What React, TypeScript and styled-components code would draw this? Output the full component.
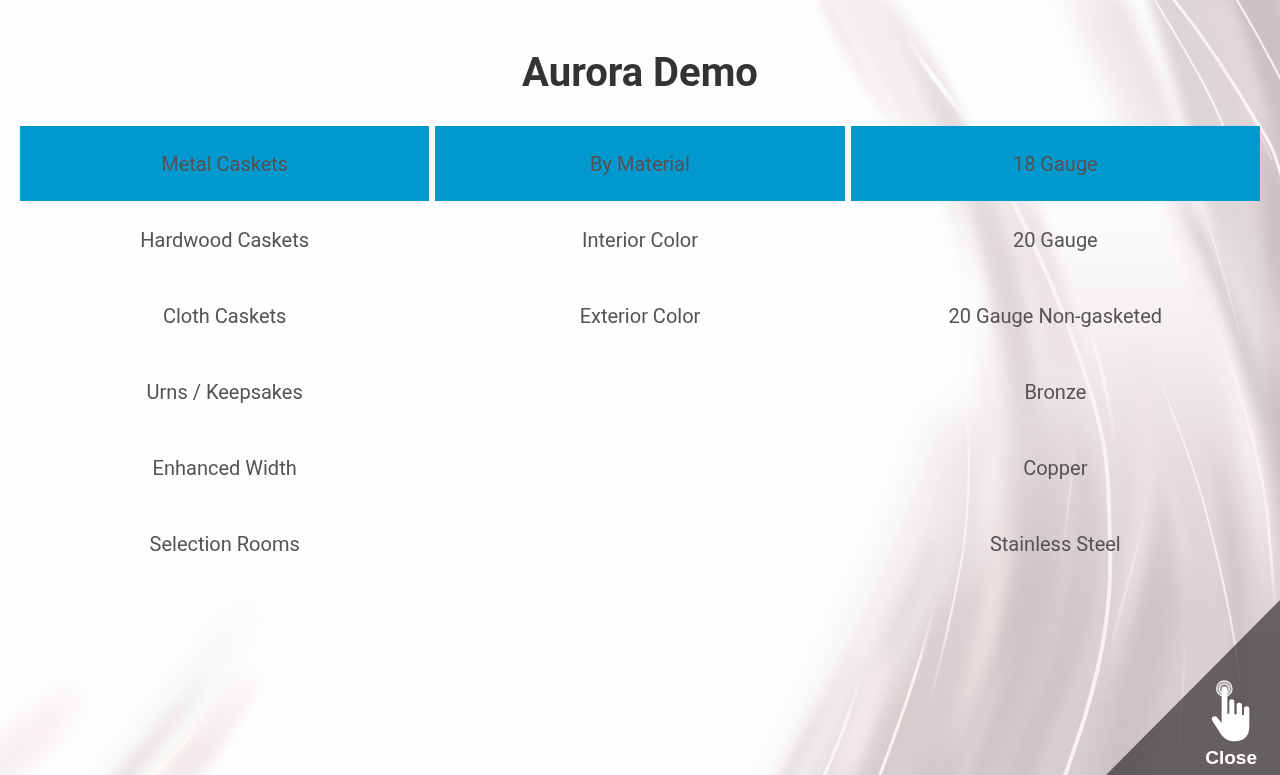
import React, { useState } from "react";
import styled, { createGlobalStyle } from "styled-components";

const GlobalStyle = createGlobalStyle`
  *, *::before, *::after { box-sizing: border-box; }
  body {
    margin: 0;
    background: #fefdfe;
    color: #555;
    font-family: Roboto, "Liberation Sans", sans-serif;
  }
`;

const Page = styled.main`
  position: relative;
  min-height: 100vh;
  padding: 49px 20px 20px;
`;

const Backdrop = styled.svg`
  position: fixed;
  inset: 0;
  z-index: -1;
  width: 100%;
  height: 100%;
`;

const Title = styled.h1`
  margin: 0 0 29px;
  color: #333336;
  font-size: 40px;
  font-weight: 700;
  line-height: 48px;
  text-align: center;
`;

const Columns = styled.nav`
  display: grid;
  grid-template-columns: repeat(3, 1fr);
  gap: 6px;
  align-items: start;
`;

const OptionList = styled.ul`
  display: grid;
  gap: 1px;
  margin: 0;
  padding: 0;
  list-style: none;
`;

const Option = styled.button<{ $selected: boolean }>`
  display: block;
  width: 100%;
  height: 75px;
  padding: 0 12px;
  border: 0;
  background: ${({ $selected }) => ($selected ? "#0099cf" : "transparent")};
  color: #555253;
  font: inherit;
  font-size: 20px;
  line-height: 24px;
  text-align: center;
  cursor: pointer;
`;

const CloseCorner = styled.button`
  position: fixed;
  right: 0;
  bottom: 0;
  display: flex;
  flex-direction: column;
  align-items: flex-end;
  justify-content: flex-end;
  gap: 5px;
  width: 174px;
  height: 175px;
  padding: 0 23px 6px 0;
  border: 0;
  background: rgba(12, 9, 11, 0.56);
  clip-path: polygon(100% 0, 100% 100%, 0 100%);
  color: #fff;
  font-family: "Liberation Sans", Arial, sans-serif;
  font-size: 19px;
  font-weight: 700;
  line-height: 22px;
  cursor: pointer;
`;

const HandIcon = styled.svg`
  width: 40px;
  height: 62px;
  margin-right: 6px;
`;

type Softness = "s" | "m" | "l";

// fade: y where the stroke starts to appear, is full, starts to vanish, is gone
type Stroke = {
  d: string;
  color: string;
  width: number;
  soft: Softness;
  opacity?: number;
  fade?: [number, number, number, number];
};

const SHADES: Stroke[] = [
  // upper left ribbon
  { d: "M818 -20C850 60 885 110 925 170", color: "#eadfe0", width: 9, soft: "m", opacity: 0.9, fade: [-20, 0, 40, 170] },
  { d: "M850 -20C890 50 925 110 952 160S985 250 1000 310", color: "#f3efef", width: 54, soft: "m", fade: [-20, 0, 200, 300] },
  { d: "M880 -10C920 50 955 120 980 205S1010 330 1016 480", color: "#e2dadc", width: 24, soft: "m", opacity: 0.9, fade: [0, 110, 300, 480] },
  { d: "M975 130C1003 230 1025 320 1030 470", color: "#dcd3d3", width: 26, soft: "m", opacity: 0.75, fade: [140, 260, 380, 470] },
  { d: "M1005 170C1035 250 1065 330 1072 430", color: "#ebe2e4", width: 36, soft: "m", opacity: 0.9, fade: [150, 220, 350, 430] },
  // right hand folds
  { d: "M1085 -20C1120 60 1160 140 1195 240", color: "#efe9ec", width: 46, soft: "l", fade: [-20, 0, 120, 240] },
  { d: "M1105 -20C1135 50 1165 110 1185 190", color: "#e9e0e4", width: 20, soft: "m", opacity: 0.7, fade: [-20, 10, 90, 190] },
  { d: "M1165 -20C1185 50 1205 110 1222 190S1262 330 1300 480", color: "#dcd5d6", width: 40, soft: "m", fade: [-20, -10, 190, 420] },
  { d: "M1245 -30C1270 40 1290 120 1310 240", color: "#cdc1c4", width: 50, soft: "m" },
  { d: "M1215 0C1250 90 1270 180 1300 290", color: "#e2d6d9", width: 30, soft: "m" },
  { d: "M1175 180C1212 270 1255 370 1290 500", color: "#d2cacc", width: 20, soft: "m", opacity: 0.9, fade: [170, 240, 400, 480] },
  { d: "M1262 120C1285 240 1288 400 1300 560", color: "#c9bfc1", width: 26, soft: "m", opacity: 0.9, fade: [110, 180, 260, 340] },
  { d: "M1262 300C1282 400 1288 470 1300 600", color: "#cabec1", width: 24, soft: "m", opacity: 0.9, fade: [330, 410, 490, 590] },
  // lower body
  { d: "M1025 300C1050 420 1050 560 1015 660S960 760 940 800", color: "#cbc2c5", width: 50, soft: "l", opacity: 0.9, fade: [380, 600, 800, 820] },
  { d: "M1082 440C1096 540 1082 640 1040 720L1010 800", color: "#c9c0c2", width: 26, soft: "m", opacity: 0.7, fade: [440, 600, 800, 820] },
  { d: "M1075 400C1092 500 1088 600 1070 680", color: "#d7ced0", width: 14, soft: "m", opacity: 0.7, fade: [400, 480, 600, 680] },
  { d: "M1160 440C1172 560 1150 650 1110 800", color: "#cabdc1", width: 44, soft: "l", opacity: 0.8, fade: [460, 620, 800, 820] },
  { d: "M1205 430C1235 520 1240 600 1242 720", color: "#d0c4c7", width: 18, soft: "m", opacity: 0.8, fade: [430, 540, 800, 820] },
  { d: "M950 600C930 680 900 740 870 800", color: "#d4cccc", width: 24, soft: "m", opacity: 0.8, fade: [560, 700, 800, 820] },
  { d: "M935 540C905 620 865 690 820 800", color: "#e0d9db", width: 14, soft: "m", opacity: 0.8, fade: [500, 600, 700, 800] },
  { d: "M855 650C830 700 800 750 770 810", color: "#e3dcdd", width: 14, soft: "m", opacity: 0.8, fade: [620, 740, 800, 820] },
  // pale sheens
  { d: "M995 440C1015 550 985 660 935 800", color: "#ebe2e1", width: 22, soft: "m", opacity: 0.85, fade: [430, 560, 640, 800] },
  { d: "M985 330C1000 440 990 520 975 600", color: "#f4eded", width: 20, soft: "m", opacity: 0.9, fade: [330, 410, 500, 600] },
  { d: "M1010 640C995 700 970 750 950 810", color: "#dfd5d7", width: 14, soft: "m", opacity: 0.8, fade: [620, 720, 800, 820] },
  { d: "M885 640C870 700 855 740 835 800", color: "#f2e9eb", width: 26, soft: "m", opacity: 0.9, fade: [620, 680, 760, 810] },
  { d: "M1140 340C1152 440 1148 520 1125 610S1085 740 1070 790", color: "#eee4e7", width: 20, soft: "m", opacity: 0.7, fade: [330, 420, 560, 700] },
  { d: "M1170 200C1215 310 1245 410 1262 520L1272 640", color: "#f5eeef", width: 20, soft: "m", opacity: 0.95, fade: [180, 280, 460, 620] },
  { d: "M1155 440C1180 500 1185 540 1188 620", color: "#ebe0e3", width: 12, soft: "m", opacity: 0.8, fade: [430, 490, 530, 620] },
  // bottom left wisps
  { d: "M255 590C225 650 170 720 105 800", color: "#f4f3f0", width: 26, soft: "l", fade: [590, 700, 800, 820] },
  { d: "M205 680C180 715 145 750 105 800", color: "#e7e1e3", width: 16, soft: "m", opacity: 0.9, fade: [670, 760, 800, 820] },
  { d: "M250 670C225 715 200 750 165 795", color: "#f3e9ea", width: 32, soft: "m", fade: [660, 750, 800, 820] },
  { d: "M90 670C55 715 25 745 -15 785", color: "#f5eaea", width: 26, soft: "l", fade: [680, 730, 800, 820] },
];

const GLINTS: Stroke[] = [
  { d: "M1152 -5C1175 35 1205 80 1224 128", color: "#fffafa", width: 2, soft: "s", opacity: 0.85 },
  { d: "M1170 -5C1215 50 1240 95 1260 127S1275 162 1284 182", color: "#fffafa", width: 3, soft: "s", opacity: 0.9 },
  { d: "M1190 20C1225 65 1250 110 1272 160", color: "#f6eeef", width: 2, soft: "s", opacity: 0.5 },
  { d: "M1234 -5C1252 25 1266 50 1284 86", color: "#fffafa", width: 2, soft: "s", opacity: 0.85 },
  { d: "M1200 200C1220 260 1235 310 1246 360", color: "#f6eeef", width: 2, soft: "s", opacity: 0.8, fade: [200, 210, 250, 360] },
  { d: "M1012 200C1045 265 1070 325 1090 390S1108 480 1110 540S1105 650 1084 720L1062 785", color: "#fbf5f6", width: 4, soft: "s", opacity: 0.9 },
  { d: "M1085 315C1100 360 1110 400 1115 450", color: "#fbf6f7", width: 4, soft: "s", opacity: 0.7, fade: [315, 350, 380, 450] },
  { d: "M1157 373C1178 425 1195 470 1205 508S1228 600 1236 651S1242 740 1243 785", color: "#fbf3f4", width: 2, soft: "s", opacity: 0.9, fade: [370, 420, 620, 700] },
  { d: "M961 370C972 430 971 510 960 569S940 665 928 708", color: "#fbf5f5", width: 2, soft: "s", opacity: 0.9, fade: [370, 430, 620, 708] },
  { d: "M935 600C925 650 905 710 876 785", color: "#fdf5f4", width: 3, soft: "s", opacity: 0.95, fade: [600, 670, 800, 820] },
  { d: "M862 670C852 710 840 740 820 785", color: "#fdf5f5", width: 3, soft: "s", opacity: 0.9, fade: [670, 720, 800, 820] },
  { d: "M1200 285C1240 380 1258 450 1267 510L1275 605", color: "#fbf3f4", width: 3, soft: "s", opacity: 0.8, fade: [285, 380, 560, 620] },
  { d: "M1148 500C1140 545 1122 600 1110 655", color: "#f3e9ec", width: 3, soft: "s", opacity: 0.7, fade: [500, 560, 600, 655] },
  { d: "M1076 430C1074 470 1068 500 1062 560", color: "#efe7e8", width: 2, soft: "s", opacity: 0.6, fade: [430, 470, 510, 560] },
  { d: "M1186 620C1184 680 1180 730 1176 785", color: "#e6dadd", width: 3, soft: "s", opacity: 0.6, fade: [620, 680, 720, 785] },
  { d: "M905 35C930 75 955 105 978 135", color: "#ffffff", width: 5, soft: "s", opacity: 0.8, fade: [35, 70, 90, 135] },
  { d: "M192 734C180 748 165 762 148 780", color: "#fffaf6", width: 2, soft: "s" },
];

const FADE_STOPS = [0, 1, 1, 0];

function StrokeSet({ name, strokes }: { name: string; strokes: Stroke[] }) {
  return (
    <>
      {strokes.map((s, i) => {
        const id = `${name}-${i}`;
        const { fade } = s;
        return (
          <g key={id} filter={`url(#soft-${s.soft})`} opacity={s.opacity ?? 1}>
            {fade && (
              <linearGradient id={id} gradientUnits="userSpaceOnUse" x1="0" x2="0" y1={fade[0]} y2={fade[3]}>
                {fade.map((y, n) => (
                  <stop
                    key={y}
                    offset={(y - fade[0]) / (fade[3] - fade[0])}
                    stopColor={s.color}
                    stopOpacity={FADE_STOPS[n]}
                  />
                ))}
              </linearGradient>
            )}
            <path d={s.d} stroke={fade ? `url(#${id})` : s.color} strokeWidth={s.width} fill="none" />
          </g>
        );
      })}
    </>
  );
}

function SilkBackdrop() {
  const region = { x: -100, y: -100, width: 1480, height: 1000, filterUnits: "userSpaceOnUse" as const };
  return (
    <Backdrop viewBox="0 0 1280 775" preserveAspectRatio="xMidYMid slice" aria-hidden="true">
      <defs>
        <filter id="soft-s" {...region}><feGaussianBlur stdDeviation="0.7" /></filter>
        <filter id="soft-m" {...region}><feGaussianBlur stdDeviation="6" /></filter>
        <filter id="soft-l" {...region}><feGaussianBlur stdDeviation="13" /></filter>
        <filter id="soft-xl" {...region}><feGaussianBlur stdDeviation="20" /></filter>
        <linearGradient id="body" gradientUnits="userSpaceOnUse" x1="0" y1="200" x2="0" y2="775">
          <stop offset="0" stopColor="#fefdfe" />
          <stop offset="0.2" stopColor="#f6f2f4" />
          <stop offset="0.4" stopColor="#e8e0e2" />
          <stop offset="0.7" stopColor="#dbd1d4" />
          <stop offset="1" stopColor="#d7cdd0" />
        </linearGradient>
        <linearGradient id="edge" gradientUnits="userSpaceOnUse" x1="0" y1="0" x2="0" y2="775">
          <stop offset="0" stopColor="#dcd2d4" />
          <stop offset="1" stopColor="#dbcfd2" />
        </linearGradient>
      </defs>
      <path
        d="M940 420C915 520 850 640 762 820L1000 820V420Z"
        fill="#efe9eb"
        filter="url(#soft-xl)"
      />
      <path
        d="M975 180C1000 300 1000 420 975 510S880 690 805 820L1340 820V180Z"
        fill="url(#body)"
        filter="url(#soft-xl)"
      />
      <path
        d="M1160 -40C1195 60 1220 160 1245 260S1270 500 1280 620L1360 620V-40Z"
        fill="url(#edge)"
        filter="url(#soft-l)"
      />
      <StrokeSet name="shade" strokes={SHADES} />
      <StrokeSet name="glint" strokes={GLINTS} />
    </Backdrop>
  );
}

function TouchHand() {
  return (
    <HandIcon viewBox="333 254 120 186" aria-hidden="true">
      <circle cx="373" cy="280" r="24" fill="#fff" fillOpacity="0.35" />
      <g fill="none" stroke="#fff" strokeOpacity="0.85">
        <circle cx="373" cy="280" r="23" strokeWidth="4" />
        <circle cx="373" cy="280" r="15" strokeWidth="4" />
      </g>
      <path
        d="M365 283a8.500 8.500 0 0 1 17 0V355h6V319a7.500 7.500 0 0 1 15 0V357h7V330a8 8 0 0 1 16 0V359h6V341a8 8 0 0 1 16 0V393C448 424 431 438 405 438C382 438 370 428 360 412L337 376C331 366 345 358 352 367L365 383Z"
        fill="#fff"
      />
    </HandIcon>
  );
}

const COLUMNS = [
  {
    label: "Category",
    options: [
      "Metal Caskets",
      "Hardwood Caskets",
      "Cloth Caskets",
      "Urns / Keepsakes",
      "Enhanced Width",
      "Selection Rooms",
    ],
  },
  { label: "Grouping", options: ["By Material", "Interior Color", "Exterior Color"] },
  {
    label: "Material",
    options: ["18 Gauge", "20 Gauge", "20 Gauge Non-gasketed", "Bronze", "Copper", "Stainless Steel"],
  },
];

export default function App() {
  const [selected, setSelected] = useState([0, 0, 0]);

  const choose = (column: number, option: number) =>
    setSelected((current) => current.map((value, i) => (i === column ? option : value)));

  return (
    <>
      <GlobalStyle />
      <SilkBackdrop />
      <Page>
        <Title>Aurora Demo</Title>
        <Columns aria-label="Catalog">
          {COLUMNS.map((column, c) => (
            <OptionList key={column.label} aria-label={column.label}>
              {column.options.map((option, o) => (
                <li key={option}>
                  <Option
                    type="button"
                    $selected={selected[c] === o}
                    aria-pressed={selected[c] === o}
                    onClick={() => choose(c, o)}
                  >
                    {option}
                  </Option>
                </li>
              ))}
            </OptionList>
          ))}
        </Columns>
        <CloseCorner type="button">
          <TouchHand />
          Close
        </CloseCorner>
      </Page>
    </>
  );
}
